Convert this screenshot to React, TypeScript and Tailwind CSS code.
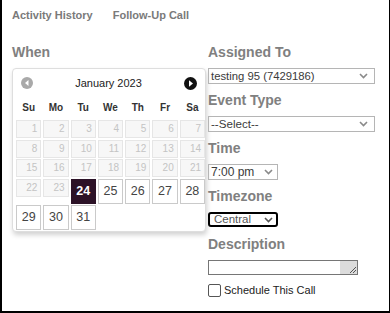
import React from "react";

const Chevron = ({ color = "#8a8a8a" }: { color?: string }) => (
  <svg width="9" height="6" viewBox="0 0 9 6">
    <path d="M1 1 L4.5 4.5 L8 1" fill="none" stroke={color} strokeWidth="1.6" />
  </svg>
);

const rows: number[][] = [
  [1, 2, 3, 4, 5, 6, 7],
  [8, 9, 10, 11, 12, 13, 14],
  [15, 16, 17, 18, 19, 20, 21],
  [22, 23, 24, 25, 26, 27, 28],
  [29, 30, 31],
];

const days = ["Su", "Mo", "Tu", "We", "Th", "Fr", "Sa"];

function Calendar() {
  return (
    <div className="w-[194px] h-[164px] rounded-[4px] border border-[#dedede] bg-white shadow-[1px_3px_5px_rgba(0,0,0,0.18)] px-[2px]">
      <div className="mt-[4px] h-[20px] flex items-center justify-between px-[6px]">
        <svg width="12" height="12" viewBox="0 0 12 12">
          <circle cx="6" cy="6" r="6" fill="#a9a9a9" />
          <path d="M7.5 3 L4 6 L7.5 9 Z" fill="#fff" />
        </svg>
        <span className="text-[11px] text-[#222] leading-[13px]">January 2023</span>
        <svg width="13" height="13" viewBox="0 0 13 13">
          <circle cx="6.5" cy="6.5" r="6.5" fill="#111" />
          <path d="M5 3.3 L9 6.5 L5 9.7 Z" fill="#fff" />
        </svg>
      </div>
      <div className="mt-[4px] h-[22px] w-[189px] ml-[1px] grid grid-cols-7 gap-x-[2px] items-center">
        {days.map((d) => (
          <div key={d} className="text-center text-[10px] font-bold text-[#333] leading-[12px]">
            {d}
          </div>
        ))}
      </div>
      <div className="mt-[1px] ml-[1px] w-[189px] flex flex-col gap-y-[1.5px]">
        {rows.map((r, i) => (
          <div key={i} className="grid grid-cols-7 gap-x-[2px] items-start">
            {r.map((n) =>
              n < 24 ? (
                <div
                  key={n}
                  className="h-[18px] border border-[#e6e6e6] bg-[#f7f7f7] text-right pr-[3px] text-[10px] leading-[16px] text-[#c4c4c4]"
                >
                  {n}
                </div>
              ) : n === 24 ? (
                <div
                  key={n}
                  className="h-[25px] border border-[#2c1227] bg-[#2c1227] flex items-center justify-center text-[12.5px] font-bold text-white"
                >
                  {n}
                </div>
              ) : (
                <div
                  key={n}
                  className="h-[25px] border border-[#cacaca] bg-white flex items-center justify-center text-[12.5px] text-[#444]"
                >
                  {n}
                </div>
              )
            )}
          </div>
        ))}
      </div>
    </div>
  );
}

const Label = ({ children }: { children: React.ReactNode }) => (
  <div className="h-[16px] leading-[16px] text-[14px] font-bold text-[#808080] mb-[8px]">{children}</div>
);

export default function App() {
  return (
    <div
      className="w-[390px] h-[313px] bg-white border-l-2 border-r border-b-2 border-black flex flex-col"
      style={{ fontFamily: '"Liberation Sans", Arial, sans-serif' }}
    >
      <div className="pt-[9px] pl-[10px] flex gap-[20px] text-[11px] leading-[13px] font-bold text-[#7a7a7a]">
        <span>Activity History</span>
        <span>Follow-Up Call</span>
      </div>
      <div className="mt-[22px] flex">
        <div className="w-[206px] pl-[10px] flex flex-col">
          <Label>When</Label>
          <Calendar />
        </div>
        <div className="flex flex-col">
          <Label>Assigned To</Label>
          <div className="w-[167px] h-[16px] border border-[#b5b5b5] flex items-center justify-between pl-[2px] pr-[6px] text-[11.3px] text-[#3a3a3a] mb-[8px]">
            <span>testing 95 (7429186)</span>
            <Chevron />
          </div>
          <Label>Event Type</Label>
          <div className="w-[167px] h-[16px] border border-[#b5b5b5] flex items-center justify-between pl-[2px] pr-[6px] text-[11.6px] text-[#3a3a3a] mb-[8px]">
            <span>--Select--</span>
            <Chevron />
          </div>
          <Label>Time</Label>
          <div className="w-[70px] h-[16px] border border-[#b5b5b5] flex items-center justify-between pl-[2px] pr-[4px] text-[12px] text-[#3a3a3a] mb-[8px]">
            <span>7:00 pm</span>
            <Chevron />
          </div>
          <Label>Timezone</Label>
          <div className="w-[70px] h-[15px] border-2 border-black rounded-[3px] flex items-center justify-between pl-[4px] pr-[3px] text-[11.5px] text-[#555] mb-[9px]">
            <span className="leading-[11px]">Central</span>
            <Chevron color="#555" />
          </div>
          <Label>Description</Label>
          <div className="w-[150px] h-[15px] border border-[#767676] flex justify-end mb-[8px]">
            <div className="w-[17px] h-full bg-[#dcdcdc] flex items-end justify-end">
              <svg width="9" height="9" viewBox="0 0 9 9">
                <path d="M8 2 L2 8 M8 5 L5 8" stroke="#555" strokeWidth="1" />
              </svg>
            </div>
          </div>
          <div className="flex items-center gap-[3px]">
            <div className="w-[13px] h-[13px] border border-[#555] rounded-[2px] bg-white" />
            <span className="text-[11px] text-[#222] leading-[14px]">Schedule This Call</span>
          </div>
        </div>
      </div>
    </div>
  );
}
